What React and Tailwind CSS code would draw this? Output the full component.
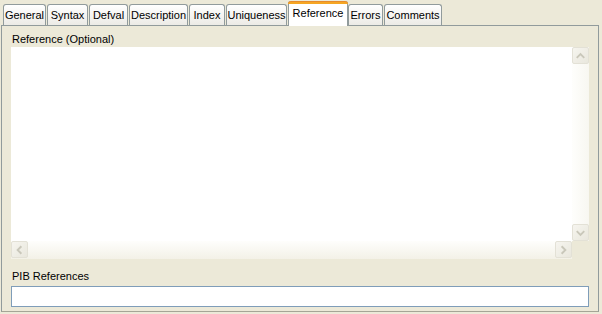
import React from 'react';

// ===== TABS =====
const tabs = [
  { label: 'General', w: 'w-[43px]' },
  { label: 'Syntax', w: 'w-[41px]' },
  { label: 'Defval', w: 'w-[39px]' },
  { label: 'Description', w: 'w-[59px]' },
  { label: 'Index', w: 'w-[36px]' },
  { label: 'Uniqueness', w: 'w-[61px]' },
  { label: 'Reference', w: 'w-[60px]', active: true },
  { label: 'Errors', w: 'w-[35px]' },
  { label: 'Comments', w: 'w-[58px]' },
];

const Tab = ({ label, w, active }) =>
  active ? (
    <div className={`${w} h-[25px] -mb-px relative z-10 bg-white border-x border-[#919b9c] rounded-t-[3px] flex flex-col`}>
      <div className="h-[3px] bg-[#f5a623] border-t border-[#e68b2c] rounded-t-[3px] -mx-px" />
      <div className="flex-1 flex items-center justify-center pb-[3px]">{label}</div>
    </div>
  ) : (
    <div className={`${w} h-[21px] mr-[1px] bg-gradient-to-b from-white to-[#ecebe6] border border-b-0 border-[#919b9c] rounded-t-[3px] flex items-center justify-center`}>
      {label}
    </div>
  );

// ===== SCROLL ARROW =====
const Arrow = ({ dir }) => {
  const paths = {
    up: 'M4 10 L8 6 L12 10',
    down: 'M4 6 L8 10 L12 6',
    left: 'M10 4 L6 8 L10 12',
    right: 'M6 4 L10 8 L6 12',
  };
  return (
    <div className="w-[17px] h-[17px] border border-[#e3e1d6] rounded-[2px] bg-gradient-to-br from-[#f6f5ef] to-[#e9e7dd] flex items-center justify-center">
      <svg width="16" height="16" viewBox="0 0 16 16">
        <path d={paths[dir]} fill="none" stroke="#c9c7ba" strokeWidth="2" />
      </svg>
    </div>
  );
};

export default function App() {
  return (
    <div className="w-[602px] h-[314px] bg-[#ece9d8] text-[11px] leading-[13px] text-black" style={{ fontFamily: '"Liberation Sans", Tahoma, sans-serif' }}>
      <div className="flex items-end h-[25px] pl-[3px]">
        {tabs.map((t) => (
          <Tab key={t.label} {...t} />
        ))}
      </div>
      <div className="ml-[1px] w-[598px] h-[287px] border border-[#919b9c] border-b-[#a5a596] pt-[7px] px-[9px]">
        <div className="h-[14px] ml-px">Reference (Optional)</div>
        <div className="flex flex-col w-[578px] h-[212px]">
          <div className="flex flex-1">
            <div className="flex-1 bg-white" />
            <div className="w-[17px] flex flex-col bg-gradient-to-r from-[#fefefc] to-[#f8f7f1]">
              <Arrow dir="up" />
              <div className="flex-1" />
              <Arrow dir="down" />
            </div>
          </div>
          <div className="flex h-[18px]">
            <div className="flex-1 flex bg-gradient-to-b from-[#fefefc] to-[#f3f1e7]">
              <Arrow dir="left" />
              <div className="flex-1" />
              <Arrow dir="right" />
            </div>
            <div className="w-[17px] bg-[#ece9d8]" />
          </div>
        </div>
        <div className="h-[14px] mt-[11px] ml-px">PIB References</div>
        <div className="w-[578px] h-[21px] mt-[2px] bg-white border border-[#7f9db9]" />
      </div>
    </div>
  );
}
